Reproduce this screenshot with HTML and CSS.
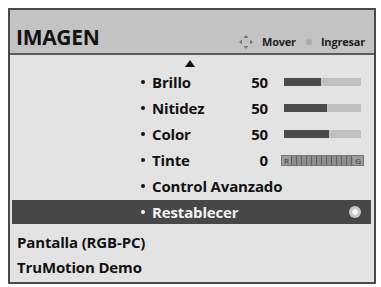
FILE: index.html
```html
<!DOCTYPE html>
<html>
<head>
<meta charset="utf-8">
<link rel="stylesheet" href="styles.css">
</head>
<body>
<div class="panel">
  <div class="header">
    <div class="title">IMAGEN</div>
    <div class="hints">
      <svg class="pad" width="14" height="14" viewBox="0 0 14 14">
        <polygon points="7,0 9.5,3 4.5,3" fill="#777"/>
        <polygon points="7,14 9.5,11 4.5,11" fill="#777"/>
        <polygon points="0,7 3,4.5 3,9.5" fill="#777"/>
        <polygon points="14,7 11,4.5 11,9.5" fill="#777"/>
      </svg>
      <span class="hint">Mover</span>
      <span class="okdot"></span>
      <span class="hint">Ingresar</span>
    </div>
  </div>
  <div class="content">
    <div class="uparrow"><span class="tri"></span></div>
    <div class="row sub"><span class="dot"></span><span class="label">Brillo</span><span class="val">50</span><span class="bar"><span class="fill" style="width:48%"></span></span></div>
    <div class="row sub"><span class="dot"></span><span class="label">Nitidez</span><span class="val">50</span><span class="bar"><span class="fill" style="width:56%"></span></span></div>
    <div class="row sub"><span class="dot"></span><span class="label">Color</span><span class="val">50</span><span class="bar"><span class="fill" style="width:58%"></span></span></div>
    <div class="row sub"><span class="dot"></span><span class="label">Tinte</span><span class="val">0</span><span class="tint"><span class="tl">R</span><span class="tl">G</span></span></div>
    <div class="row sub"><span class="dot"></span><span class="label">Control Avanzado</span></div>
    <div class="row sub sel"><span class="dot"></span><span class="label">Restablecer</span><span class="okbtn"></span></div>
    <div class="row top first">Pantalla (RGB-PC)</div>
    <div class="row top">TruMotion Demo</div>
  </div>
</div>
</body>
</html>
```
FILE: styles.css
```css
html, body { margin: 0; padding: 0; background: #fff; }
body { font-family: "Open Sans", "DejaVu Sans", sans-serif; color: #121212; }
.panel {
  margin: 8px 0 0 8px;
  width: 364px;
  height: 272px;
  border: 2px solid #4a4a4a;
  background: #e3e3e3;
  display: flex;
  flex-direction: column;
}
.header {
  height: 43px;
  background: #c3c3c3;
  border-bottom: 2px solid #5a5a5a;
  display: flex;
  align-items: flex-end;
  justify-content: space-between;
  padding: 0 9px 0 6px;
}
.title {
  font-size: 21px;
  font-weight: 700;
  letter-spacing: -0.3px;
  line-height: 28px;
  padding-bottom: 2px;
}
.hints {
  display: flex;
  align-items: center;
  padding-bottom: 4px;
  font-size: 11px;
  font-weight: 700;
  color: #222;
}
.pad { margin-right: 9px; }
.hint { letter-spacing: -0.2px; }
.okdot {
  width: 6px; height: 6px; border-radius: 50%;
  background: #aaa;
  margin: 0 9px 0 10px;
}
.content { display: flex; flex-direction: column; }
.uparrow { height: 14px; position: relative; }
.tri {
  position: absolute; left: 175px; top: 5px;
  width: 0; height: 0;
  border-left: 5px solid transparent;
  border-right: 5px solid transparent;
  border-bottom: 7px solid #111;
}
.row {
  height: 26px;
  display: flex;
  align-items: center;
  font-size: 15px;
  font-weight: 700;
  letter-spacing: -0.15px;
  white-space: nowrap;
}
.sub { padding-left: 131px; }
.dot {
  width: 4px; height: 4px; border-radius: 50%;
  background: currentColor;
  margin-right: 7px;
  flex: none;
}
.label { width: 88px; flex: none; }
.val { width: 28px; text-align: right; flex: none; font-size: 15px; }
.bar {
  margin-left: 16px;
  width: 77px; height: 8px;
  background: #c0c0c0;
  display: flex;
}
.fill { background: #4c4c4c; height: 100%; }
.tint {
  margin-left: 13px;
  width: 81px; height: 9px;
  background: repeating-linear-gradient(90deg, #8e8e8e 0 4px, #5e5e5e 4px 5px);
  border: 1px solid #777;
  display: flex; justify-content: space-between; align-items: center;
  font-size: 8px; font-weight: 400; letter-spacing: 0; color: #333;
}
.tl { background: #9c9c9c; padding: 0 2px; line-height: 9px; }
.sel {
  margin: 1px 3px 0 2px;
  height: 24px;
  background: #474747;
  color: #f2f2f2;
  padding-left: 129px;
  position: relative;
}
.okbtn {
  position: absolute; right: 10px; top: 6px;
  width: 12px; height: 12px; border-radius: 50%;
  background: radial-gradient(circle, #fff 0 2.5px, #c8c8c8 3px 6px);
}
.top { padding-left: 7px; height: 25px; }
.first { margin-top: 5px; }
```
